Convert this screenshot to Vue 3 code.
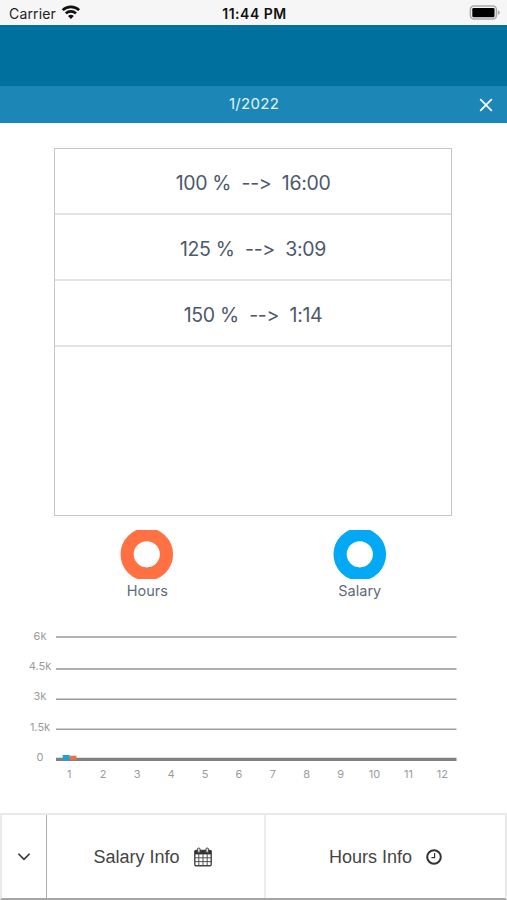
<script setup>
const rates = [
  { label: '100 %', value: '16:00' },
  { label: '125 %', value: '3:09' },
  { label: '150 %', value: '1:14' },
]
const legend = [
  { label: 'Hours', color: '#ff7043' },
  { label: 'Salary', color: '#03a9f4' },
]
const ticks = [
  { label: '6k', labelY: 20, lineY: 17, size: 1.5, color: '#9a9a9a' },
  { label: '4.5k', labelY: 50, lineY: 49, size: 2, color: '#adadad' },
  { label: '3k', labelY: 80, lineY: 79.2, size: 1.5, color: '#9a9a9a' },
  { label: '1.5k', labelY: 111, lineY: 109.2, size: 1.5, color: '#9e9e9e' },
  { label: '0', labelY: 141, lineY: 139.4, size: 3.2, color: '#808080' },
]
</script>

<template>
  <div class="screen">
    <header class="status">
      <div class="carrier">
        <span>Carrier</span>
        <svg width="20" height="15" viewBox="0 0 20 15" fill="none" stroke="#111" stroke-width="2.7">
          <path d="M1.7 5.1C6.1 .8 13.7 .8 18.1 5.1" />
          <path d="M4.8 8.4C7.6 5.7 12.2 5.7 15 8.4" />
          <path d="M7 10.9Q9.9 8.5 12.8 10.9L9.9 13.9Z" fill="#111" stroke="none" />
        </svg>
      </div>
      <strong class="time">11:44 PM</strong>
      <div class="power">
        <svg width="31" height="16" viewBox="0 0 31 16">
          <rect x="1.4" y="1.1" width="26" height="13" rx="3.5" fill="#f6f6f6" stroke="#aaa" stroke-width="1.5" />
          <rect x="3.3" y="3" width="22.2" height="9.2" rx="1.2" fill="#000" />
          <path d="M28.8 5.3Q30.8 6 30.8 7.6Q30.8 9.2 28.8 9.9Z" fill="#aaa" />
        </svg>
      </div>
    </header>
    <div class="banner"></div>
    <div class="period">
      <span class="month">1/2022</span>
      <svg class="close" width="14" height="14" viewBox="0 0 14 14" fill="none" stroke="#fff" stroke-width="1.7">
        <path d="M1.2 1.2L12.8 12.8M12.8 1.2L1.2 12.8" />
      </svg>
    </div>

    <main>
      <section class="rates">
        <div v-for="r in rates" :key="r.label" class="rate">
          <span>{{ r.label }}</span><span>--&gt;</span><span>{{ r.value }}</span>
        </div>
      </section>

      <section class="legend">
        <div v-for="l in legend" :key="l.label" class="series">
          <svg width="54" height="49" viewBox="0 0 54 49">
            <circle cx="26.8" cy="24.3" r="19.7" fill="none" :stroke="l.color" stroke-width="13.2" />
          </svg>
          <span>{{ l.label }}</span>
        </div>
      </section>

      <svg class="chart" width="507" height="160" viewBox="0 0 507 160">
        <g v-for="t in ticks" :key="t.label">
          <line x1="56" x2="456.5" :y1="t.lineY" :y2="t.lineY" :stroke="t.color" :stroke-width="t.size" />
          <text x="40" :y="t.labelY">{{ t.label }}</text>
        </g>
        <rect x="62.7" y="135" width="7" height="5" fill="#1da1dc" />
        <rect x="69.7" y="135.7" width="6.8" height="4" fill="#ee7048" />
        <text v-for="n in 12" :key="n" :x="69.3 + (n - 1) * 33.92" y="158">{{ n }}</text>
      </svg>
    </main>

    <footer class="actions">
      <div class="toggle">
        <svg width="14" height="10" viewBox="0 0 14 10" fill="none" stroke="#333" stroke-width="1.6">
          <path d="M1.4 1.8L7 7.3L12.6 1.8" />
        </svg>
      </div>
      <div class="action salary">
        <span>Salary Info</span>
        <svg width="18" height="20" viewBox="0 0 18 20" fill="none" stroke="#444">
          <rect x=".8" y="3.4" width="16.4" height="15.4" rx="1.2" stroke-width="1.4" />
          <path d="M.8 3.4H17.2V7.4H.8Z" fill="#333" stroke="none" />
          <path d="M4.8 7V18.5M9 7V18.5M13.2 7V18.5M1 10.8H17M1 14.6H17" stroke-width=".9" />
          <rect x="3.5" y="1" width="2.6" height="4.4" rx="1.2" fill="#ddd" stroke-width="1" />
          <rect x="11.9" y="1" width="2.6" height="4.4" rx="1.2" fill="#ddd" stroke-width="1" />
        </svg>
      </div>
      <div class="action hours">
        <span>Hours Info</span>
        <svg width="16" height="16" viewBox="0 0 16 16" fill="none" stroke="#333">
          <circle cx="8" cy="8" r="6.8" stroke-width="2" />
          <path d="M8.6 4V8.7H5.4" stroke-width="1.2" />
        </svg>
      </div>
    </footer>
  </div>
</template>

<style>
body { margin: 0; background: #fff; }
</style>

<style scoped>
.screen {
  width: 507px;
  height: 900px;
  display: flex;
  flex-direction: column;
  overflow: hidden;
  background: #fff;
  font-family: Inter, "Liberation Sans", sans-serif;
}
svg { display: block; flex: none; }
.status {
  height: 25px;
  box-sizing: border-box;
  padding: 2px 7px 0 9px;
  display: grid;
  grid-template-columns: 1fr auto 1fr;
  align-items: center;
  background: #f6f6f6;
  color: #222;
  font-size: 14px;
}
.carrier { display: flex; align-items: center; gap: 5px; letter-spacing: .15px; }
.carrier svg { margin-top: -2px; }
.time { font-size: 14px; font-weight: 600; letter-spacing: .5px; color: #111; }
.power { display: flex; justify-content: flex-end; }
.power svg { margin-top: -1px; }
.banner { height: 61px; background: #00709f; }
.period {
  height: 37px;
  display: grid;
  grid-template-columns: 1fr auto 1fr;
  align-items: center;
  background: #1c87b7;
  color: #e4f3fa;
}
.month { grid-column: 2; font-size: 15px; letter-spacing: .3px; line-height: 18px; margin: -2px 0 0 1px; }
.close { justify-self: end; margin-right: 14px; margin-top: 1px; }
main { flex: 1; padding-top: 25px; }
.rates {
  width: 398px;
  height: 368px;
  margin: 0 0 0 54px;
  box-sizing: border-box;
  border: 1.5px solid #c6c6c6;
}
.rate {
  height: 66px;
  box-sizing: border-box;
  border-bottom: 2px solid #e3e3e3;
  display: flex;
  justify-content: center;
  align-items: center;
  gap: 10.5px;
  padding-top: 4px;
  color: #4c596b;
  font-size: 19.5px;
  letter-spacing: -.35px;
  font-feature-settings: "calt" 0, "liga" 0;
}
.legend { display: flex; padding: 14px 41px 0; height: 91px; box-sizing: border-box; }
.series {
  flex: 1;
  display: flex;
  flex-direction: column;
  align-items: center;
  color: #606b79;
  font-size: 14.5px;
  line-height: 18px;
  gap: 3px;
}
.chart { margin-top: 13px; }
.chart text { font-size: 11px; fill: #9b9b9b; text-anchor: middle; }
.actions {
  height: 87px;
  box-sizing: border-box;
  display: flex;
  border: 2px solid #e9e9e9;
  border-bottom-color: #a5a5a5;
  font-family: "Liberation Sans", Arial, sans-serif;
  font-size: 18px;
  color: #444;
}
.actions > div { display: flex; align-items: center; justify-content: center; box-sizing: border-box; }
.toggle { width: 45px; border-right: 1.5px solid #ababab; }
.action { gap: 14px; }
.action span { padding-top: 1px; }
.salary { width: 219px; border-right: 2px solid #ececec; padding-right: 6px; }
.hours { flex: 1; }
</style>
